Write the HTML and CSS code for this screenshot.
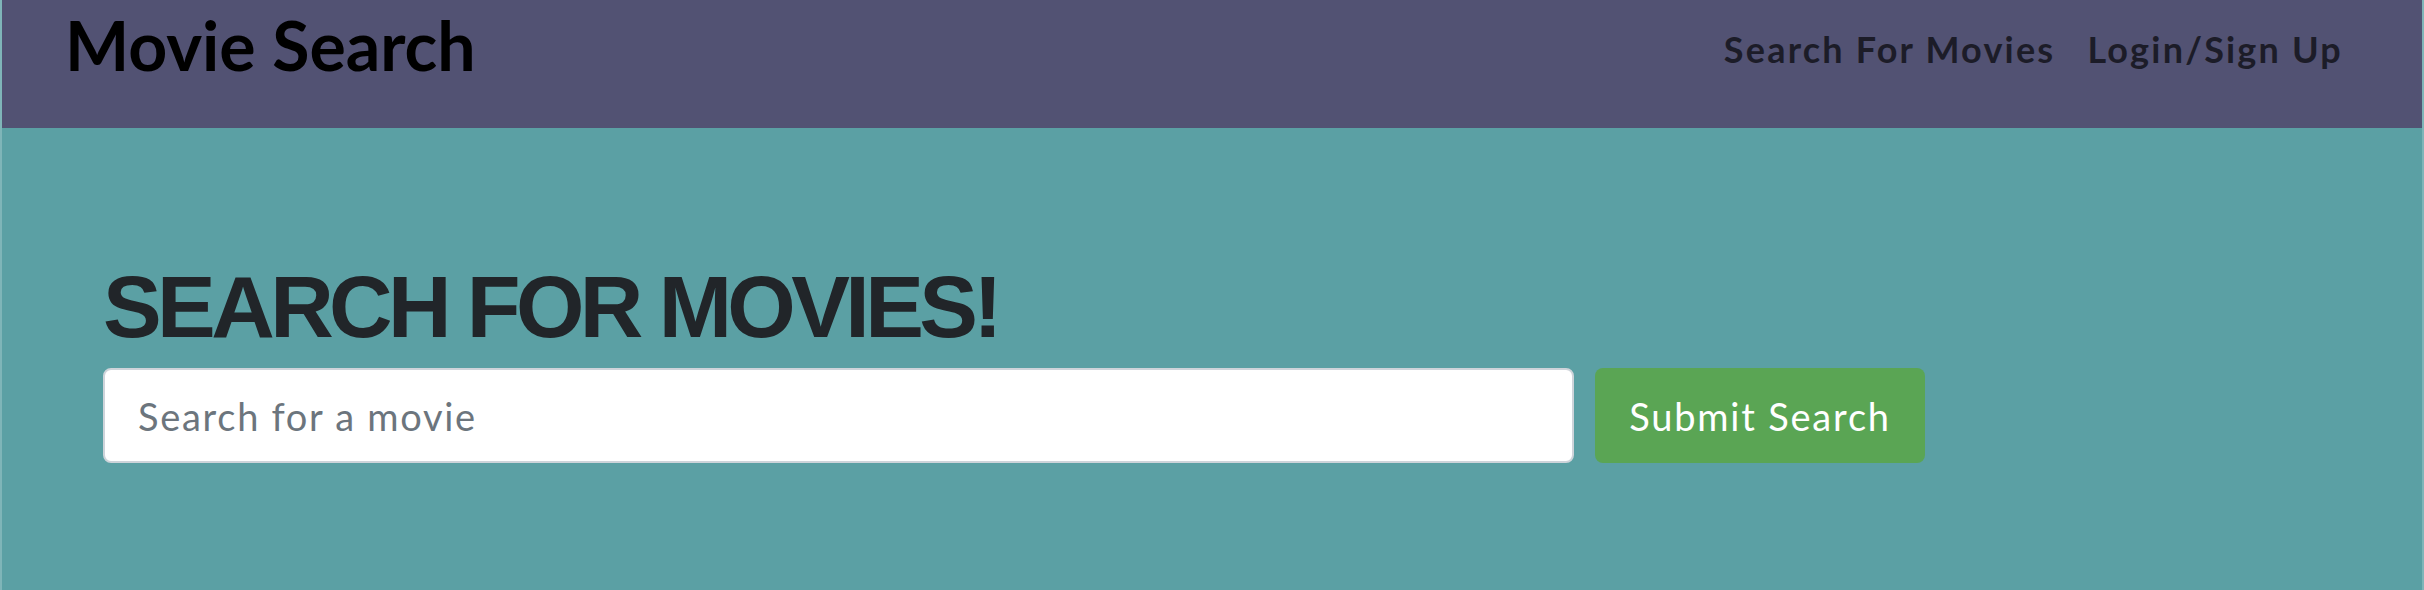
FILE: index.html
```html
<!DOCTYPE html>
<html lang="en">
<head>
<meta charset="utf-8">
<title>Movie Search</title>
<link rel="stylesheet" href="styles.css">
</head>
<body>
<header class="navbar">
  <a class="brand" href="#">Movie Search</a>
  <nav class="nav">
    <a class="nav-link" href="#">Search For Movies</a>
    <a class="nav-link" href="#">Login/Sign Up</a>
  </nav>
</header>
<main class="hero">
  <h1 class="hero-title">SEARCH FOR MOVIES!</h1>
  <form class="search-form">
    <input class="search-input" type="text" placeholder="Search for a movie">
    <button class="search-btn" type="button">Submit Search</button>
  </form>
</main>
</body>
</html>
```
FILE: styles.css
```css
html, body {
  margin: 0;
  padding: 0;
}
body {
  height: 590px;
  background: #5ba0a4;
  border-left: 2px solid rgba(255,255,255,0.22);
  border-right: 2px solid rgba(255,255,255,0.22);
  font-family: "Lato", "Noto Sans", sans-serif;
  overflow: hidden;
}
.navbar {
  height: 128px;
  background: #525273;
  display: flex;
  justify-content: space-between;
  align-items: flex-start;
  padding: 0 79px 0 63px;
}
.brand {
  margin-top: 11px;
  font-size: 68px;
  line-height: 1;
  font-weight: 700;
  color: #000;
  text-decoration: none;
}
.nav {
  display: flex;
  gap: 32px;
  margin-top: 31px;
}
.nav-link {
  font-size: 36px;
  line-height: 1;
  font-weight: 700;
  letter-spacing: 2.2px;
  color: #1c1c28;
  text-decoration: none;
}
.hero {
  padding: 135px 0 0 101px;
}
.hero-title {
  margin: 0 0 17px;
  font-family: "Liberation Sans", Arial, sans-serif;
  font-weight: 700;
  font-size: 88px;
  line-height: 1;
  letter-spacing: -4.6px;
  color: #212529;
}
.search-form {
  display: flex;
  gap: 21px;
}
.search-input {
  box-sizing: border-box;
  width: 1471px;
  height: 95px;
  border: 2px solid #ced4da;
  border-radius: 8px;
  padding: 0 20px 0 33px;
  font-family: "Lato", sans-serif;
  font-size: 38px;
  letter-spacing: 1.7px;
  color: #495057;
  background: #fff;
  outline: none;
}
.search-input::placeholder {
  color: #6c757d;
}
.search-btn {
  width: 330px;
  height: 95px;
  border: none;
  border-radius: 8px;
  background: #5aa554;
  color: #fff;
  font-family: "Lato", sans-serif;
  font-size: 38px;
  letter-spacing: 1.8px;
  padding: 0;
}
```
